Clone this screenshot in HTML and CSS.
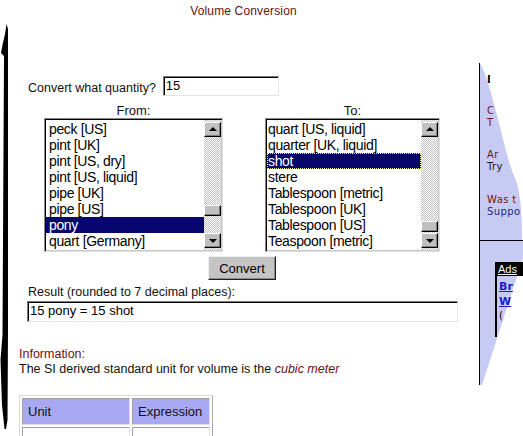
FILE: index.html
```html
<!DOCTYPE html>
<html>
<head>
<meta charset="utf-8">
<link rel="stylesheet" href="styles.css">
</head>
<body>
<div class="page">
  <svg class="left-stroke" width="12" height="436" viewBox="0 0 12 436">
    <path d="M6.5,24 L8,29 L8,330 L7.5,420 L6,429 L4.5,429 L2,405 L0.5,360 L2.5,335 L4,56 L1,53 L2.5,45 L5,34 Z" fill="#000"/>
  </svg>
  <main class="main">
    <h1 class="title">Volume Conversion</h1>
    <div class="qty-row">
      <span class="qty-label">Convert what quantity?</span>
      <div class="field qty">15</div>
    </div>
    <div class="lists">
      <div class="col col-from">
        <div class="col-label">From:</div>
        <div class="listbox">
          <ul class="items">
            <li>peck [US]</li>
            <li>pint [UK]</li>
            <li>pint [US, dry]</li>
            <li>pint [US, liquid]</li>
            <li>pipe [UK]</li>
            <li>pipe [US]</li>
            <li class="sel">pony</li>
            <li>quart [Germany]</li>
          </ul>
          <div class="scroll">
            <div class="arrow"><span class="tri up"></span></div>
            <div class="track"><div class="thumb thumb-from"></div></div>
            <div class="arrow"><span class="tri down"></span></div>
          </div>
        </div>
      </div>
      <div class="col col-to">
        <div class="col-label">To:</div>
        <div class="listbox">
          <ul class="items items-to">
            <li>quart [US, liquid]</li>
            <li>quarter [UK, liquid]</li>
            <li class="sel focus">shot</li>
            <li>stere</li>
            <li>Tablespoon [metric]</li>
            <li>Tablespoon [UK]</li>
            <li>Tablespoon [US]</li>
            <li>Teaspoon [metric]</li>
          </ul>
          <div class="scroll">
            <div class="arrow"><span class="tri up"></span></div>
            <div class="track"><div class="thumb thumb-to"></div></div>
            <div class="arrow"><span class="tri down"></span></div>
          </div>
        </div>
      </div>
    </div>
    <div class="btn-row"><button class="btn">Convert</button></div>
    <div class="result-label">Result (rounded to 7 decimal places):</div>
    <div class="field result">15 pony = 15 shot</div>
    <div class="info-head">Information:</div>
    <p class="info">The SI derived standard unit for volume is the <em>cubic meter</em></p>
    <table class="units">
      <tr><th class="c1">Unit</th><th class="c2">Expression</th></tr>
      <tr><td class="c1"></td><td class="c2"></td></tr>
    </table>
  </main>
  <aside class="side">
    <svg class="side-bg" width="44" height="436" viewBox="0 0 44 436">
      <path d="M0,63 L1,63 C8,75 14,100 21,127 C26,147 30,165 36,178 C41,190 43,210 43,240 L44,240 L44,258 L3,385 L0,385 Z" fill="#c7cbf3"/>
      <rect x="0" y="63" width="1" height="322" fill="#000"/>
      <rect x="0" y="240" width="44" height="1" fill="#000"/>
    </svg>
    <div class="side-content">
      <div class="s-line s-head">I</div>
      <div class="s-group g1">
        <div class="s-line red">C</div>
        <div class="s-line red">T</div>
      </div>
      <div class="s-group g2">
        <div class="s-line red">Ar</div>
        <div class="s-line dark">Try</div>
      </div>
      <div class="s-group g3">
        <div class="s-line red">Was t</div>
        <div class="s-line blue">Suppo</div>
      </div>
      <div class="ads">
        <div class="ads-title">Ads</div>
        <div class="ad-link">Br</div>
        <div class="ad-link">W</div>
        <div class="ad-text">(</div>
      </div>
    </div>
  </aside>
</div>
</body>
</html>
```

FILE: styles.css
```css
* { box-sizing: border-box; }
html, body { margin: 0; padding: 0; background: #fff; }
body {
  font-family: "Liberation Sans", Arial, sans-serif;
  color: #111;
  width: 523px;
  height: 436px;
  overflow: hidden;
}
.page {
  position: relative;
  display: flex;
  width: 523px;
  height: 436px;
  overflow: hidden;
}
.left-stroke {
  position: absolute;
  left: 0;
  top: 0;
}
.main {
  width: 479px;
  flex: none;
}
.title {
  margin: 0;
  padding: 4px 0 0 8px;
  font-size: 12px;
  line-height: 14px;
  font-weight: normal;
  text-align: center;
  color: #6b1010;
  letter-spacing: 0.15px;
}
.qty-row {
  margin-top: 58px;
  padding-left: 28px;
  display: flex;
  align-items: center;
  gap: 7px;
  height: 20px;
}
.qty-label {
  font-size: 12.5px;
  padding-top: 3px;
}
.field {
  border-style: solid;
  border-width: 1px;
  border-color: #7a7a7a #e4e4e4 #e4e4e4 #7a7a7a;
  box-shadow: inset 1px 1px 0 #000;
  background: #fff;
  font-size: 13px;
  line-height: 17px;
  padding-left: 2px;
  color: #000;
}
.qty {
  width: 116px;
  height: 20px;
}
.lists {
  margin-top: 7px;
  padding-left: 44px;
  display: flex;
  gap: 42px;
}
.col-label {
  font-size: 13px;
  line-height: 15px;
  text-align: center;
}
.col-from { width: 179px; }
.col-to { width: 175px; }
.listbox {
  display: flex;
  height: 134px;
  border-style: solid;
  border-width: 1px;
  border-color: #8a8a8a #e0e0e0 #e0e0e0 #8a8a8a;
  box-shadow: inset 1px 1px 0 #000, inset -1px -1px 0 #c8c8c8;
  padding: 1px 1px 1px 1px;
  background: #fff;
}
.items {
  list-style: none;
  margin: 0;
  padding: 1px 0 0 0;
  flex: 1;
  overflow: hidden;
}
.items li {
  height: 16px;
  line-height: 16px;
  font-size: 14px;
  letter-spacing: -0.35px;
  padding-left: 3px;
  white-space: nowrap;
  color: #000;
}
.items-to li { padding-left: 1px; }
.items li.sel {
  background: #06066e;
  color: #fff;
}
.items li.focus {
  outline: 1px dotted #e8e8a0;
  outline-offset: -1px;
}
.scroll {
  width: 17px;
  flex: none;
  display: flex;
  flex-direction: column;
  padding: 2px 0;
  background: repeating-conic-gradient(#c0c0c0 0 25%, #fff 0 50%) 0 0 / 2px 2px;
}
.arrow {
  height: 15px;
  flex: none;
  background: #c0c0c0;
  border-style: solid;
  border-width: 1px;
  border-color: #fff #000 #000 #fff;
  box-shadow: inset -1px -1px 0 #808080;
  display: flex;
  align-items: center;
  justify-content: center;
}
.tri {
  width: 0;
  height: 0;
  border-left: 4px solid transparent;
  border-right: 4px solid transparent;
}
.tri.up { border-bottom: 4px solid #000; margin-top: -1px; }
.tri.down { border-top: 4px solid #000; }
.track { flex: 1; }
.thumb {
  height: 11px;
  background: #c0c0c0;
  border-style: solid;
  border-width: 1px;
  border-color: #fff #000 #000 #fff;
  box-shadow: inset -1px -1px 0 #808080;
}
.thumb-from { margin-top: 68px; }
.thumb-to { margin-top: 84px; }
.btn-row {
  margin-top: 4px;
  margin-left: 44px;
  width: 396px;
  display: flex;
  justify-content: center;
}
.btn {
  width: 68px;
  height: 24px;
  margin: 0;
  padding: 0;
  font-family: "Liberation Sans", Arial, sans-serif;
  font-size: 13px;
  color: #000;
  background: #c4c4c4;
  border-style: solid;
  border-width: 1px;
  border-color: #f0f0f0 #202020 #202020 #f0f0f0;
  box-shadow: inset -1px -1px 0 #8a8a8a;
}
.result-label {
  margin-top: 5px;
  padding-left: 28px;
  font-size: 12.5px;
  line-height: 14px;
}
.result {
  margin: 2px 0 0 27px;
  width: 431px;
  height: 21px;
  line-height: 18px;
}
.info-head {
  margin-top: 25px;
  padding-left: 19px;
  font-size: 12.5px;
  line-height: 15px;
  color: #6b1010;
}
.info {
  margin: 0;
  padding-left: 19px;
  font-size: 12.5px;
  line-height: 15px;
}
.info em { color: #6b1010; }
.units {
  margin: 18px 0 0 19px;
  border-collapse: separate;
  border-spacing: 2px;
  border-style: solid;
  border-width: 1px;
  border-color: #d8d8d8 #a8a8a8 #a8a8a8 #d8d8d8;
}
.units th, .units td {
  border-style: solid;
  border-width: 1px;
  border-color: #a0a0a0 #e0e0e0 #e0e0e0 #a0a0a0;
  font-size: 13px;
  font-weight: normal;
  text-align: left;
  padding: 0 0 0 5px;
}
.units th {
  height: 27px;
  background: #a9a9f3;
  color: #111;
}
.units td { height: 20px; }
.units .c1 { width: 108px; }
.units .c2 { width: 78px; }
.side {
  position: relative;
  flex: 1;
  overflow: hidden;
}
.side-bg {
  position: absolute;
  left: 0;
  top: 0;
}
.side-content {
  position: relative;
  padding-left: 8px;
  font-family: "DejaVu Sans", Verdana, sans-serif;
  font-size: 10px;
  letter-spacing: 0.4px;
}
.s-line {
  line-height: 12px;
  white-space: nowrap;
}
.s-head { margin-top: 74px; color: #000; font-weight: bold; }
.g1 { margin-top: 19px; }
.g2 { margin-top: 20px; }
.g3 { margin-top: 21px; }
.red { color: #7a1010; }
.dark { color: #2a1010; }
.blue { color: #1a2a8a; }
.ads {
  margin-top: 44px;
  margin-left: 8px;
  border-left: 2px solid #000;
  height: 75px;
  width: 40px;
  letter-spacing: 0;
}
.ads-title {
  background: #000;
  color: #fff;
  font-family: "Liberation Sans", Arial, sans-serif;
  font-size: 11px;
  line-height: 14px;
  height: 14px;
  text-decoration: underline;
  padding-left: 1px;
}
.ad-link {
  font-family: "DejaVu Sans", Verdana, sans-serif;
  font-weight: bold;
  font-size: 11px;
  line-height: 15px;
  color: #1a1acc;
  text-decoration: underline;
  padding-left: 2px;
}
.ads-title + .ad-link { margin-top: 3px; }
.ad-text {
  font-size: 10px;
  line-height: 14px;
  padding-left: 2px;
  color: #000;
}
```
